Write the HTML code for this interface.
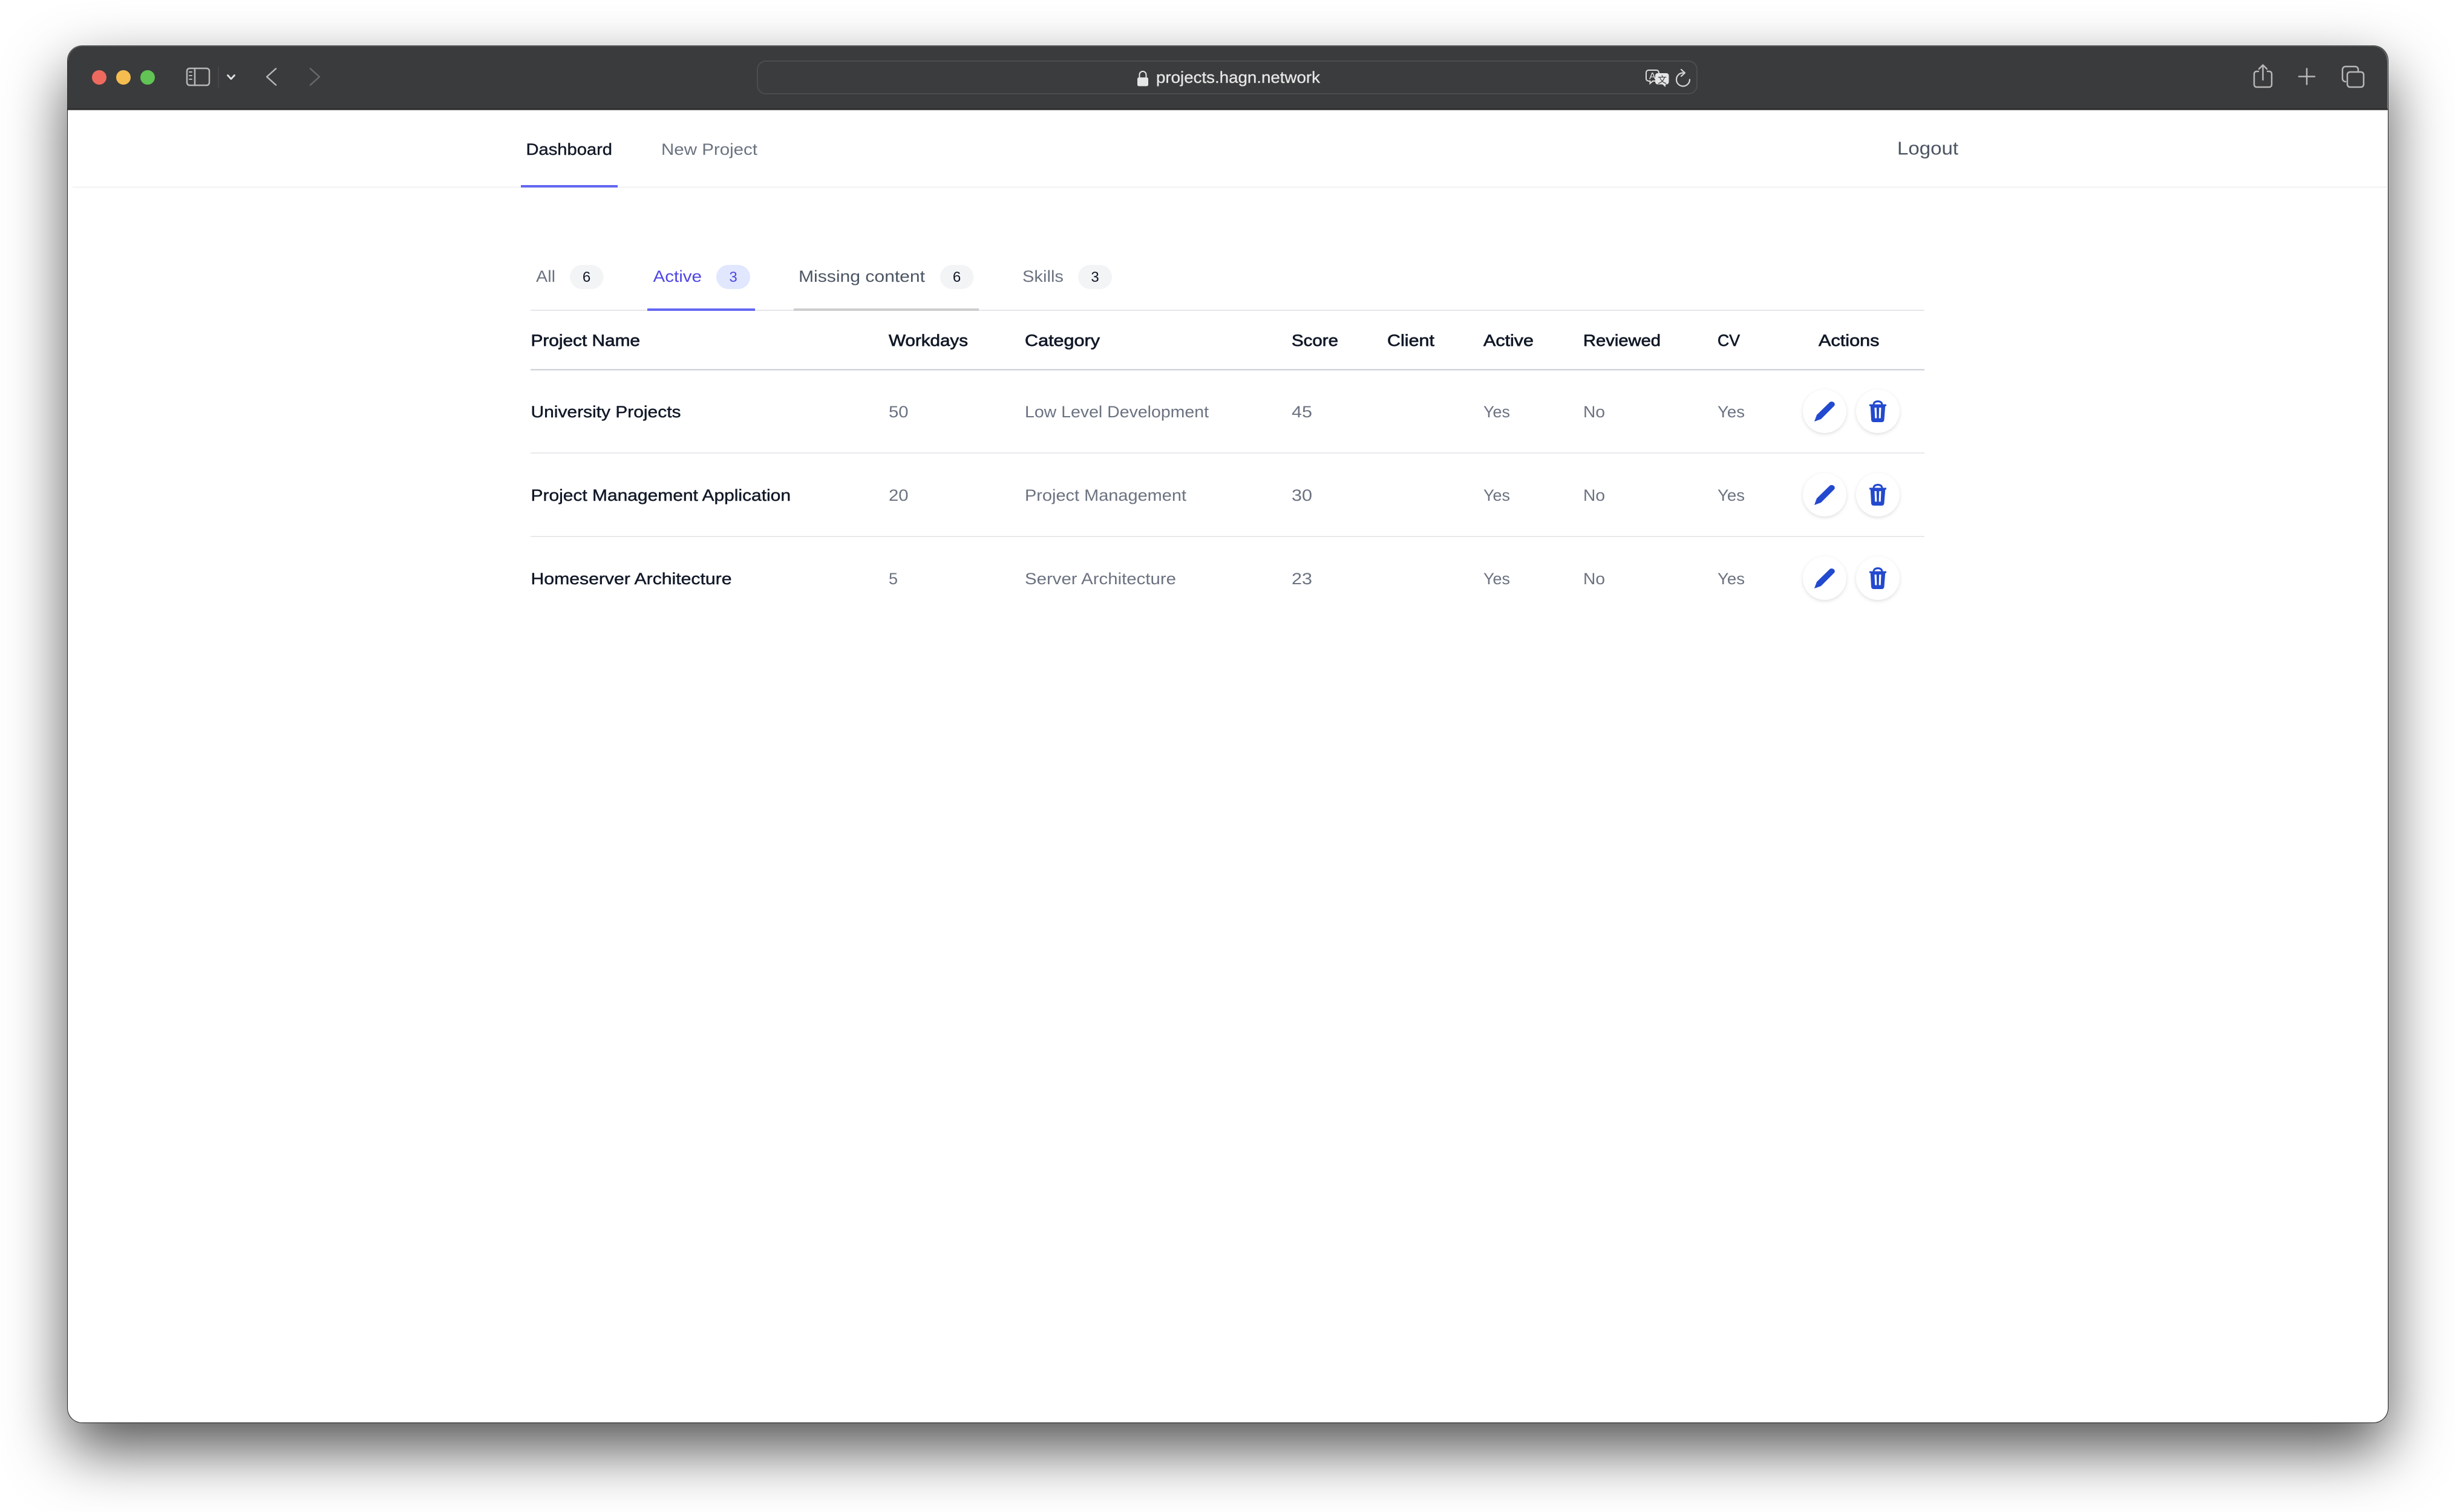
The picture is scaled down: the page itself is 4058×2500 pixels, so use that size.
<!DOCTYPE html>
<html lang="en">
<head>
<meta charset="utf-8">
<title>projects.hagn.network</title>
<style>
html,body{margin:0;padding:0;background:#fff;width:4058px;height:2500px;overflow:hidden}
#win{position:absolute;left:111.5px;top:75.5px;width:3835px;height:2276.5px;border-radius:24px;background:#fff;box-shadow:0 0 0 1px rgba(0,0,0,.8),0 44px 100px 0 rgba(0,0,0,.68)}
svg{position:absolute;left:0;top:0}
text{font-family:"Liberation Sans","Noto Sans CJK SC",sans-serif;font-size:27px}
.m{fill:#111827;stroke:#111827;stroke-width:.7px}
.g{fill:#6b7280}
.n{fill:#111827;font-size:24px}
.ic{fill:none;stroke:#b7b7b8;stroke-width:2.5;stroke-linecap:round;stroke-linejoin:round}
.btn{fill:#fff;filter:drop-shadow(0 2px 3px rgba(0,0,0,.13))}
.bl{fill:#2349cf}
</style>
</head>
<body>
<div id="win"></div>
<svg width="4058" height="2500" viewBox="0 0 4058 2500" xmlns="http://www.w3.org/2000/svg">
  <!-- toolbar -->
  <path d="M111.500 181V99.500a24 24 0 0 1 24-24H3922.500a24 24 0 0 1 24 24V181Z" fill="#3a3b3c"/>
  <path d="M112.500 100a24 24 0 0 1 24-24H3921.500a24 24 0 0 1 24 24" fill="none" stroke="#5c5d5e" stroke-width="1.5"/>
  <rect x="111" y="180" width="3836" height="1.5" fill="#0c0c0c"/>
  <rect x="112" y="181.500" width="3834" height="1.5" fill="#cfcfcf"/>

  <!-- traffic lights -->
  <circle cx="164" cy="128" r="12" fill="#ee6a5f"/>
  <circle cx="204" cy="128" r="12" fill="#f5bd4f"/>
  <circle cx="244" cy="128" r="12" fill="#61c454"/>

  <!-- sidebar toggle -->
  <rect x="309" y="113" width="37" height="28" rx="4.5" class="ic"/>
  <line x1="322" y1="113" x2="322" y2="141" class="ic"/>
  <path d="M313 119h4M313 125h4M313 131h4" class="ic" style="stroke-width:2"/>
  <line x1="361" y1="110" x2="361" y2="146" stroke="#4a4b4c" stroke-width="1.5"/>
  <path d="M376.500 124.500L382 130.500L387.500 124.500" fill="none" stroke="#e4e4e4" stroke-width="2.800" stroke-linecap="round" stroke-linejoin="round"/>
  <path d="M456 113.500L441 127L456 140.500" class="ic"/>
  <path d="M513 113.500L528 127L513 140.500" class="ic" style="stroke:#68696a"/>

  <!-- url bar -->
  <rect x="1252" y="101" width="1553" height="54" rx="14" fill="#3b3c3d" stroke="#4c4d4f" stroke-width="2"/>
  <rect x="1880" y="128" width="18" height="14.500" rx="2.500" fill="#e4e5e5"/>
  <path d="M1883.500 128v-4.500a5.500 5.500 0 0 1 11 0v4.500" fill="none" stroke="#e4e5e5" stroke-width="2"/>
  <text x="1911" y="137" textLength="271" lengthAdjust="spacingAndGlyphs" style="font-size:27px;fill:#e8e8e8;stroke:#e8e8e8;stroke-width:.3px">projects.hagn.network</text>

  <!-- translate icon -->
  <path d="M2725 116h13a4 4 0 0 1 4 4v10a4 4 0 0 1-4 4h-6l-4.500 4v-4h-2.500a4 4 0 0 1-4-4v-10a4 4 0 0 1 4-4Z" fill="#3b3c3d" stroke="#dcdcdc" stroke-width="2"/>
  <text x="2726" y="131" style="font-size:16px;fill:#e6e6e6">A</text>
  <path d="M2740 121h14.500a4 4 0 0 1 4 4v10.500a4 4 0 0 1-4 4h-1.500v4.500l-5-4.500h-8a4 4 0 0 1-4-4v-10.500a4 4 0 0 1 4-4Z" fill="#e6e6e6"/>
  <text x="2740" y="137" style="font-size:15px;fill:#3a3b3c">文</text>
  <!-- refresh -->
  <path d="M2782 120.500a11 11 0 1 0 11 11" fill="none" stroke="#d6d6d6" stroke-width="2.200" stroke-linecap="round"/>
  <path d="M2779 115L2785 120.500L2779 126" fill="none" stroke="#d6d6d6" stroke-width="2.200" stroke-linecap="round" stroke-linejoin="round"/>

  <!-- right toolbar icons -->
  <path d="M3733 118h-3a4 4 0 0 0-4 4v18a4 4 0 0 0 4 4h21a4 4 0 0 0 4-4v-18a4 4 0 0 0-4-4h-3" class="ic"/>
  <path d="M3740.500 132V108M3734 114L3740.500 107.500L3747 114" class="ic"/>
  <path d="M3813 113.500V139.500M3800 126.500H3826" class="ic"/>
  <rect x="3880" y="119" width="27" height="25" rx="4.500" class="ic"/>
  <path d="M3877 135a5 5 0 0 1-5-5v-15a5 5 0 0 1 5-5h16a5 5 0 0 1 5 5v4" class="ic"/>

  <!-- top nav -->
  <rect x="120" y="308" width="3826" height="3" fill="#f5f6f7"/>
  <rect x="861" y="306" width="160" height="4" fill="#6366f1"/>
  <text x="869.500" y="256" textLength="142.500" lengthAdjust="spacingAndGlyphs" class="m" style="stroke-width:.4px">Dashboard</text>
  <text x="1093" y="256" textLength="159" lengthAdjust="spacingAndGlyphs" class="g">New Project</text>
  <text x="3136" y="255.500" textLength="101" lengthAdjust="spacingAndGlyphs" style="font-size:31px;fill:#4b5563">Logout</text>

  <!-- tabs -->
  <rect x="877" y="512" width="2304" height="2" fill="#e5e7eb"/>
  <text x="886" y="466" textLength="32" lengthAdjust="spacingAndGlyphs" class="g">All</text>
  <rect x="942" y="438" width="55.500" height="40" rx="20" fill="#f3f4f6"/>
  <text x="969.500" y="466" text-anchor="middle" class="n">6</text>

  <text x="1079.500" y="466" textLength="80.500" lengthAdjust="spacingAndGlyphs" style="fill:#4f46e5">Active</text>
  <rect x="1184" y="438" width="56" height="40" rx="20" fill="#e0e7ff"/>
  <text x="1212" y="466" text-anchor="middle" class="n" style="fill:#4f46e5">3</text>
  <rect x="1070" y="510" width="178" height="4" fill="#6366f1"/>

  <text x="1320" y="466" textLength="209" lengthAdjust="spacingAndGlyphs" style="fill:#4b5563">Missing content</text>
  <rect x="1554" y="438" width="55.500" height="40" rx="20" fill="#f3f4f6"/>
  <text x="1581.500" y="466" text-anchor="middle" class="n">6</text>
  <rect x="1312" y="510" width="306" height="4" fill="#cdcdcd"/>

  <text x="1690" y="466" textLength="68" lengthAdjust="spacingAndGlyphs" class="g">Skills</text>
  <rect x="1782" y="438" width="56" height="40" rx="20" fill="#f3f4f6"/>
  <text x="1810" y="466" text-anchor="middle" class="n">3</text>

  <!-- table header -->
  <text x="877.500" y="572" textLength="180.500" lengthAdjust="spacingAndGlyphs" class="m">Project Name</text>
  <text x="1469" y="572" textLength="131" lengthAdjust="spacingAndGlyphs" class="m">Workdays</text>
  <text x="1694" y="572" textLength="124" lengthAdjust="spacingAndGlyphs" class="m">Category</text>
  <text x="2135" y="572" textLength="77" lengthAdjust="spacingAndGlyphs" class="m">Score</text>
  <text x="2293" y="572" textLength="78" lengthAdjust="spacingAndGlyphs" class="m">Client</text>
  <text x="2452" y="572" textLength="83" lengthAdjust="spacingAndGlyphs" class="m">Active</text>
  <text x="2617" y="572" textLength="128" lengthAdjust="spacingAndGlyphs" class="m">Reviewed</text>
  <text x="2839" y="572" textLength="37" lengthAdjust="spacingAndGlyphs" class="m">CV</text>
  <text x="3006" y="572" textLength="100.500" lengthAdjust="spacingAndGlyphs" class="m">Actions</text>
  <rect x="877" y="610" width="2304" height="2.500" fill="#d1d5db"/>

  <!-- row 1 -->
  <text x="877.500" y="690" textLength="248" lengthAdjust="spacingAndGlyphs" class="m" style="stroke-width:.45px">University Projects</text>
  <text x="1469" y="690" textLength="32.500" lengthAdjust="spacingAndGlyphs" class="g">50</text>
  <text x="1694" y="690" textLength="304" lengthAdjust="spacingAndGlyphs" class="g">Low Level Development</text>
  <text x="2135" y="690" textLength="34" lengthAdjust="spacingAndGlyphs" class="g">45</text>
  <text x="2452" y="690" textLength="44" lengthAdjust="spacingAndGlyphs" class="g">Yes</text>
  <text x="2617" y="690" textLength="36" lengthAdjust="spacingAndGlyphs" class="g">No</text>
  <text x="2839" y="690" textLength="45" lengthAdjust="spacingAndGlyphs" class="g">Yes</text>
  <g>
    <circle class="btn" cx="3016" cy="680" r="36"/>
    <path class="bl" d="M2999 697L3003 686L3025 664.500Q3029 663 3032 666Q3033.500 669 3032 671L3010 693Z"/>
    <circle class="btn" cx="3104" cy="680" r="36"/>
    <path class="bl" d="M3090 668.500h5.500c.5-4 3.500-6.500 8.500-6.500s8 2.500 8.500 6.500h5.500v3h-1.800l-1.700 22.500c-.2 2.600-1.800 4-4 4h-13.500c-2.200 0-3.800-1.400-4-4L3091.800 671.500H3090ZM3098.500 668.500h11c-.4-2-2.400-3.300-5.500-3.300s-5.100 1.300-5.500 3.300ZM3098.500 674l.8 17.500h3L3101.800 674ZM3106.200 674l-.5 17.500h3l.8-17.500Z" fill-rule="evenodd"/>
  </g>
  <rect x="877" y="748" width="2304" height="2" fill="#e9eaec"/>

  <!-- row 2 -->
  <text x="877.500" y="828" textLength="429.500" lengthAdjust="spacingAndGlyphs" class="m" style="stroke-width:.45px">Project Management Application</text>
  <text x="1469" y="828" textLength="32.500" lengthAdjust="spacingAndGlyphs" class="g">20</text>
  <text x="1694" y="828" textLength="267" lengthAdjust="spacingAndGlyphs" class="g">Project Management</text>
  <text x="2135" y="828" textLength="34" lengthAdjust="spacingAndGlyphs" class="g">30</text>
  <text x="2452" y="828" textLength="44" lengthAdjust="spacingAndGlyphs" class="g">Yes</text>
  <text x="2617" y="828" textLength="36" lengthAdjust="spacingAndGlyphs" class="g">No</text>
  <text x="2839" y="828" textLength="45" lengthAdjust="spacingAndGlyphs" class="g">Yes</text>
  <g transform="translate(0,138)">
    <circle class="btn" cx="3016" cy="680" r="36"/>
    <path class="bl" d="M2999 697L3003 686L3025 664.500Q3029 663 3032 666Q3033.500 669 3032 671L3010 693Z"/>
    <circle class="btn" cx="3104" cy="680" r="36"/>
    <path class="bl" d="M3090 668.500h5.500c.5-4 3.500-6.500 8.500-6.500s8 2.500 8.500 6.500h5.500v3h-1.800l-1.700 22.500c-.2 2.600-1.800 4-4 4h-13.500c-2.200 0-3.800-1.400-4-4L3091.800 671.500H3090ZM3098.500 668.500h11c-.4-2-2.400-3.300-5.500-3.300s-5.100 1.300-5.500 3.300ZM3098.500 674l.8 17.500h3L3101.800 674ZM3106.200 674l-.5 17.500h3l.8-17.500Z" fill-rule="evenodd"/>
  </g>
  <rect x="877" y="886" width="2304" height="2" fill="#e9eaec"/>

  <!-- row 3 -->
  <text x="877.500" y="966" textLength="332" lengthAdjust="spacingAndGlyphs" class="m" style="stroke-width:.45px">Homeserver Architecture</text>
  <text x="1469" y="966" textLength="15" lengthAdjust="spacingAndGlyphs" class="g">5</text>
  <text x="1694" y="966" textLength="250" lengthAdjust="spacingAndGlyphs" class="g">Server Architecture</text>
  <text x="2135" y="966" textLength="34" lengthAdjust="spacingAndGlyphs" class="g">23</text>
  <text x="2452" y="966" textLength="44" lengthAdjust="spacingAndGlyphs" class="g">Yes</text>
  <text x="2617" y="966" textLength="36" lengthAdjust="spacingAndGlyphs" class="g">No</text>
  <text x="2839" y="966" textLength="45" lengthAdjust="spacingAndGlyphs" class="g">Yes</text>
  <g transform="translate(0,276)">
    <circle class="btn" cx="3016" cy="680" r="36"/>
    <path class="bl" d="M2999 697L3003 686L3025 664.500Q3029 663 3032 666Q3033.500 669 3032 671L3010 693Z"/>
    <circle class="btn" cx="3104" cy="680" r="36"/>
    <path class="bl" d="M3090 668.500h5.500c.5-4 3.500-6.500 8.500-6.500s8 2.500 8.500 6.500h5.500v3h-1.800l-1.700 22.500c-.2 2.600-1.800 4-4 4h-13.500c-2.200 0-3.800-1.400-4-4L3091.800 671.500H3090ZM3098.500 668.500h11c-.4-2-2.400-3.300-5.500-3.300s-5.100 1.300-5.500 3.300ZM3098.500 674l.8 17.500h3L3101.800 674ZM3106.200 674l-.5 17.500h3l.8-17.500Z" fill-rule="evenodd"/>
  </g>
</svg>
</body>
</html>
